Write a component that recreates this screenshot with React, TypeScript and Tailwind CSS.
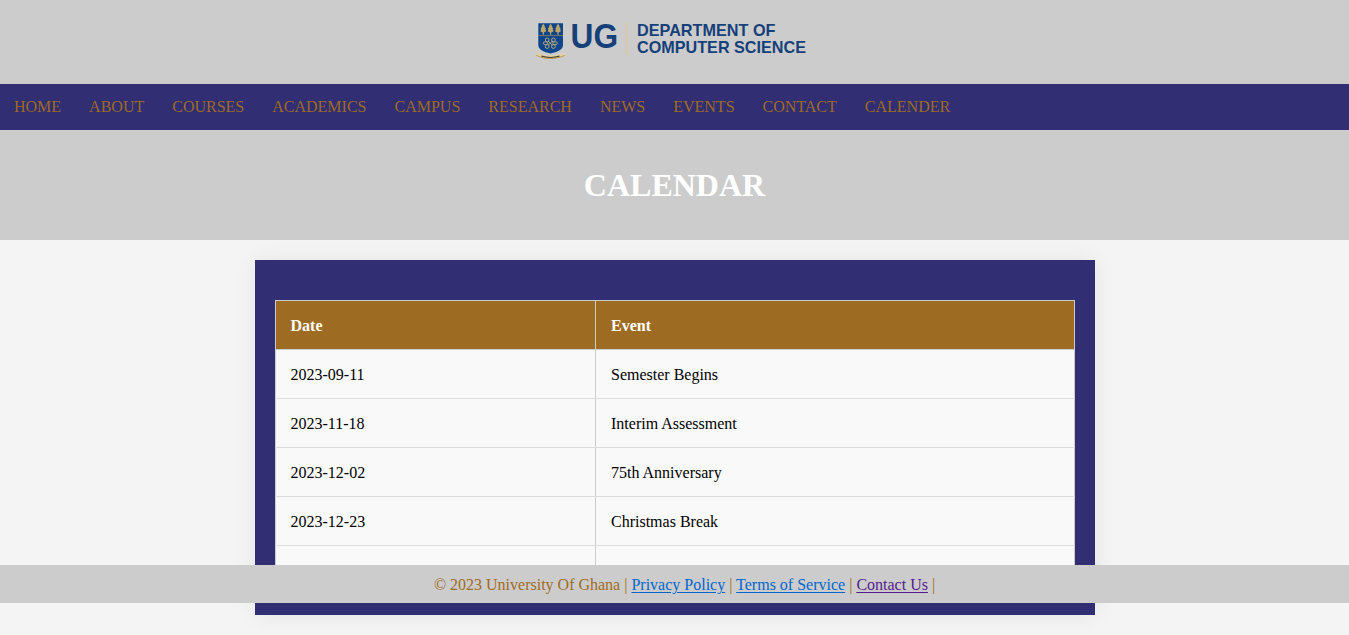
const navItems = ["HOME", "ABOUT", "COURSES", "ACADEMICS", "CAMPUS", "RESEARCH", "NEWS", "EVENTS", "CONTACT", "CALENDER"];

const events = [
  { date: "2023-09-11", event: "Semester Begins" },
  { date: "2023-11-18", event: "Interim Assessment" },
  { date: "2023-12-02", event: "75th Anniversary" },
  { date: "2023-12-23", event: "Christmas Break" },
];

function Leaf({ x }: { x: number }) {
  return (
    <path
      transform={`translate(${x} 24.2)`}
      fill="#bfa567"
      d="M0 -0.4 L1.7 2 L1.3 2.6 L2.7 4.4 L2.1 5 L3 7 L0.6 8.2 V10.6 H-0.6 V8.2 L-3 7 L-2.1 5 L-2.7 4.4 L-1.3 2.6 L-1.7 2 Z"
    />
  );
}

function Logo() {
  return (
    <svg viewBox="530 10 290 60" className="block h-[60px] w-[290px] overflow-visible" role="img">
      <path d="M538.3 23.3 H563 V45 C563 49.5 558 52 550.6 53.4 C543 52 538.3 49.5 538.3 45 Z" fill="#0f458b" />
      <Leaf x={543.3} />
      <Leaf x={550.6} />
      <Leaf x={558} />
      <path d="M538.3 35.6 H563" stroke="#8b8768" strokeWidth="0.8" />
      <g fill="none" stroke="#b3a87c" strokeWidth="1">
        <circle cx="547.2" cy="39.9" r="1.9" />
        <circle cx="553.4" cy="39.9" r="1.9" />
        <circle cx="547.2" cy="46.5" r="1.9" />
        <circle cx="553.4" cy="46.5" r="1.9" />
        <ellipse cx="545.6" cy="43.2" rx="2.5" ry="1.4" />
        <ellipse cx="555" cy="43.2" rx="2.5" ry="1.4" />
        <path d="M548 41 L552.6 45.4 M552.6 41 L548 45.4" />
      </g>
      <path d="M535.8 52.2 L539 53 C546 56.2 555 56.2 562 53 L565.2 52.2 L564 55.8 C556 59.6 545 59.6 537 55.8 Z" fill="#e0cfa7" />
      <path d="M541.5 56.2 C547 57.8 554 57.8 559.5 56.2" fill="none" stroke="#4a4230" strokeWidth="1.2" />
      <path d="M536.4 55.4 C545 59.6 556 59.6 564.6 55.4" fill="none" stroke="#bd9344" strokeWidth="0.9" />
      <path d="M626.5 23 V55" stroke="#dbc8a0" strokeWidth="1.4" />
      <g fill="#164079" className="font-['Liberation_Sans',Arial,sans-serif] font-bold">
        <text x="570.6" y="48" fontSize="34.5" textLength="47.5" lengthAdjust="spacingAndGlyphs">UG</text>
        <text x="637" y="36" fontSize="16.6" textLength="138.5" lengthAdjust="spacingAndGlyphs">DEPARTMENT OF</text>
        <text x="637" y="53.3" fontSize="16.6" textLength="169" lengthAdjust="spacingAndGlyphs">COMPUTER SCIENCE</text>
      </g>
    </svg>
  );
}

export default function App() {
  return (
    <div className="relative h-[635px] overflow-hidden bg-[#f4f4f4] font-['Liberation_Serif','Times_New_Roman',serif] text-base leading-[18px] text-black">
      <header className="flex h-[84px] justify-center bg-[#ccc] pt-[10px] pl-px">
        <Logo />
      </header>
      <nav className="flex h-[46px] bg-[#312e74]">
        {navItems.map((item) => (
          <a key={item} href="#" className="p-[14px] text-[#9e6b22]">{item}</a>
        ))}
      </nav>
      <div className="flex h-[110px] items-center justify-center bg-[#ccc]">
        <h1 className="text-[32px] leading-9 font-bold text-white">CALENDAR</h1>
      </div>
      <main className="mx-auto mt-5 h-[355px] w-[840px] bg-[#312e74] p-5 pt-10 shadow-[0_0_20px_rgba(0,0,0,0.07)]">
        <table className="w-full table-fixed border-collapse text-left">
          <colgroup>
            <col className="w-[320px]" />
            <col />
          </colgroup>
          <thead>
            <tr className="bg-[#9e6b22] text-white">
              <th className="h-[49px] border border-[#ccc] px-[15px] pt-[2px] pb-0">Date</th>
              <th className="h-[49px] border border-[#ccc] pt-[2px] pr-[15px] pb-0 pl-[15.5px]">Event</th>
            </tr>
          </thead>
          <tbody className="bg-[#f9f9f9]">
            {events.map((row) => (
              <tr key={row.date}>
                <td className="h-[49px] border border-[#ccc] border-y-[#ddd] px-[15px] pt-[2px] pb-0">{row.date}</td>
                <td className="h-[49px] border border-[#ccc] border-y-[#ddd] pt-[2px] pr-[15px] pb-0 pl-[15.5px]">{row.event}</td>
              </tr>
            ))}
            <tr>
              <td className="h-[49px] border border-[#ccc] border-y-[#ddd]" />
              <td className="h-[49px] border border-[#ccc] border-y-[#ddd]" />
            </tr>
          </tbody>
        </table>
      </main>
      <footer className="absolute bottom-8 left-0 h-[38px] w-[1369px] bg-[#ccc] px-[10px] pt-[11px] text-center text-[#9e6b22]">
        © 2023 University Of Ghana | <a href="#" className="text-[#0066cc] underline underline-offset-2">Privacy Policy</a> | <a href="#" className="text-[#0066cc] underline underline-offset-2">Terms of Service</a> | <a href="#" className="text-[#551a8b] underline underline-offset-2">Contact Us</a> |
      </footer>
    </div>
  );
}
